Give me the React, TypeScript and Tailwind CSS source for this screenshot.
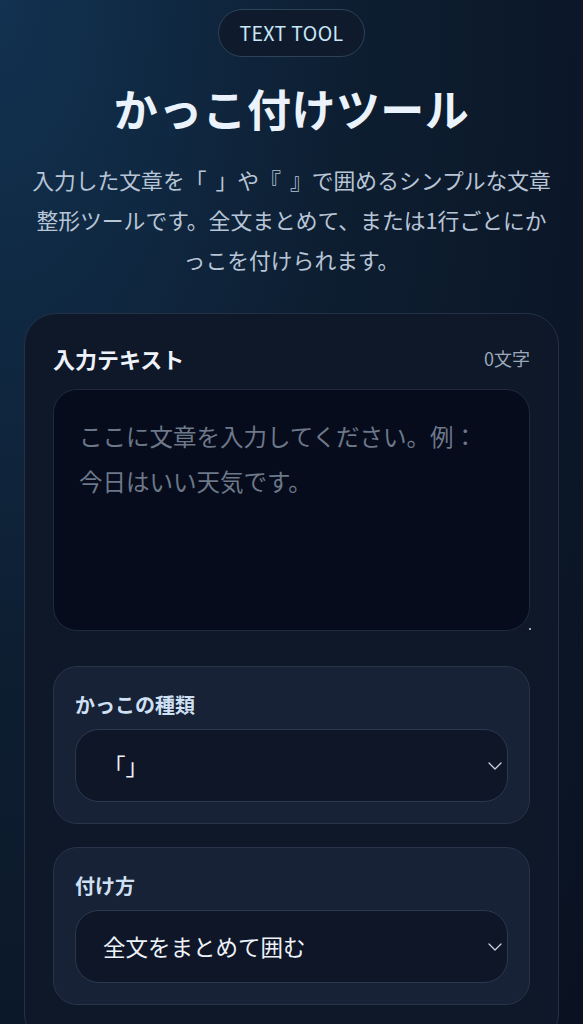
import { ChevronDown } from "lucide-react";

const font = "font-['Noto_Sans_CJK_JP','Noto_Sans',sans-serif]";

/* ── Select field box ───────────────────────────────────────────── */
function OptionBox({ label, value }: { label: string; value: string }) {
  return (
    <div className="rounded-[24px] border border-[#27344a] bg-[#172236] px-[21px] pt-[25px] pb-[21px]">
      <div className="text-[20px] font-bold leading-[26px] text-[#cfe0f5]">{label}</div>
      <div className="mt-[11px] flex h-[73px] items-center justify-between rounded-[24px] border border-[#2a3850] bg-[#0e1628] pl-[27px] pr-0">
        <span className="text-[22.5px] text-[#eef3fa]">{value}</span>
        <ChevronDown size={24} strokeWidth={1.3} className="text-[#c9d4e3]" />
      </div>
    </div>
  );
}

export default function App() {
  return (
    <div
      className={`${font} min-h-screen w-full bg-[radial-gradient(ellipse_at_top_left,#123251_0%,#0d1d30_45%,#0a1120_100%)] text-white`}
    >
      <main className="flex flex-col items-center px-6 pt-[9px] pb-10">
        {/* Badge */}
        <span className="flex h-12 items-center rounded-full border border-[#2c4257] bg-[#0f1b2d] px-[20px] text-[19.5px] tracking-[0.02em] text-[#c8e8f8]">
          TEXT TOOL
        </span>

        {/* Title */}
        <h1 className="mt-[23px] text-[44px] font-bold leading-[56px] tracking-[0.01em] text-[#eaf2fb]">
          かっこ付けツール
        </h1>

        {/* Description */}
        <p className="mt-[24px] text-center text-[21.8px] leading-[40px] text-[#b8c5d6]">
          入力した文章を「<span className="ml-[9px]">」</span>や『<span className="ml-[9px]">』</span>で囲めるシンプルな文章
          <br />
          整形ツールです。全文まとめて、または1行ごとにか
          <br />
          っこを付けられます。
        </p>

        {/* Card */}
        <section className="mt-[33px] w-full rounded-[32px] border border-[#233046] bg-[#0f1828] px-[28px] pt-[29px] pb-10">
          <div className="mb-[16px] flex items-center justify-between">
            <h2 className="text-[22px] font-bold leading-[30px] text-[#eef3fa]">入力テキスト</h2>
            <span className="text-[18px] text-[#9aa8ba]">0文字</span>
          </div>

          <div className="relative">
            <textarea
              className="block h-[242px] w-full resize-none rounded-[24px] border border-[#1f2a3d] bg-[#060c1c] px-[25px] py-[24px] text-[23.5px] leading-[45px] text-white outline-none placeholder:text-[#6d7889]"
              placeholder={"ここに文章を入力してください。例：\n今日はいい天気です。"}
            />
            <span className="absolute -right-[1px] bottom-[1px] h-[2px] w-[2px] rounded-full bg-[#c8d2df]" />
          </div>

          <div className="mt-[35px] flex flex-col gap-[23px]">
            <OptionBox label="かっこの種類" value="「」" />
            <OptionBox label="付け方" value="全文をまとめて囲む" />
          </div>
        </section>
      </main>
    </div>
  );
}
